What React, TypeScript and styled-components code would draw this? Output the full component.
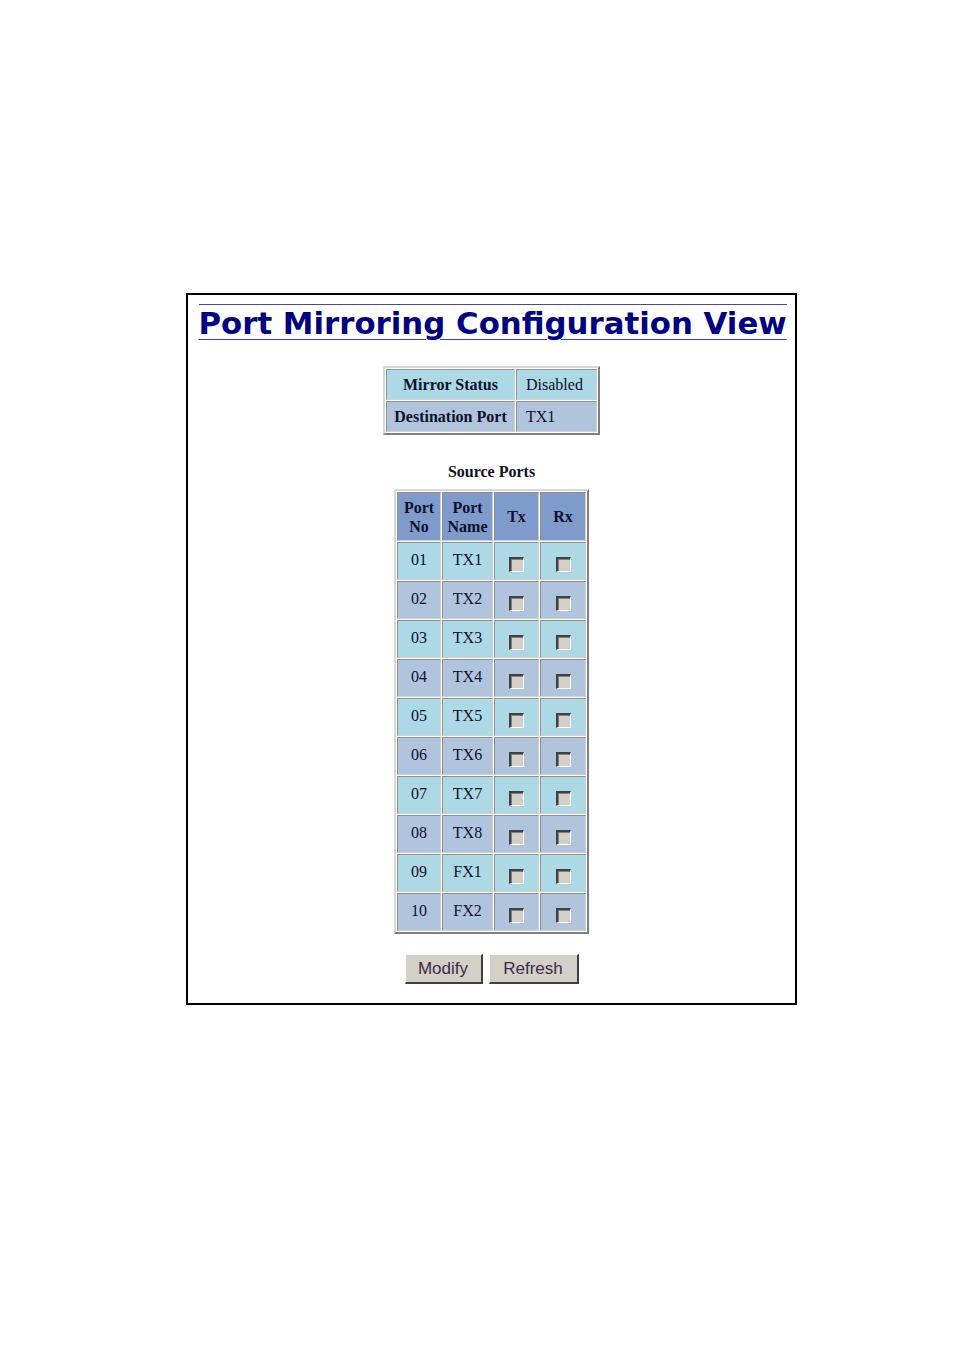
import styled, { createGlobalStyle } from 'styled-components';

const GlobalStyle = createGlobalStyle`
  html, body {
    margin: 0;
    padding: 0;
    background: #ffffff;
  }
`;

const Page = styled.div`
  padding: 293px 0 0 186px;
  height: 1351px;
  box-sizing: border-box;
`;

const Frame = styled.div`
  width: 611px;
  height: 712px;
  box-sizing: border-box;
  border: 2px solid #000;
  display: flex;
  flex-direction: column;
  align-items: center;
  padding-top: 9px;
`;

const Title = styled.h1`
  margin: 0 0 0 2px;
  width: 588px;
  border-top: 1px solid #4848a0;
  text-align: center;
  font-family: 'DejaVu Sans', Verdana, sans-serif;
  font-weight: bold;
  font-size: 30.8px;
  line-height: 36px;
  color: #000080;
  text-decoration: underline;
  text-decoration-color: #3c3ca8;
  text-decoration-thickness: 1px;
  text-underline-offset: 5px;
  white-space: nowrap;
`;

const Grid = styled.table<{ $top: number }>`
  margin-top: ${(p) => p.$top}px;
  border-collapse: separate;
  border-spacing: 1px;
  border: 2px solid;
  border-color: #d8d8d8 #808080 #808080 #d8d8d8;
  font-family: 'Liberation Serif', 'Times New Roman', serif;
  font-size: 16px;
  color: #10102a;
`;

const Cell = styled.td<{ $bg: string; $bold?: boolean; $w?: number; $h: number; $left?: boolean }>`
  background: ${(p) => p.$bg};
  font-weight: ${(p) => (p.$bold ? 'bold' : 'normal')};
  width: ${(p) => (p.$w ? `${p.$w}px` : 'auto')};
  height: ${(p) => p.$h}px;
  border: 1px solid;
  border-color: #909090 #d0d0d0 #d0d0d0 #909090;
  text-align: ${(p) => (p.$left ? 'left' : 'center')};
  padding: ${(p) => (p.$left ? '0 4px 0 9px' : '0 4px')};
  line-height: 19px;
  box-sizing: border-box;
  white-space: nowrap;
`;

const PortCell = styled(Cell)`
  padding-bottom: 4px;
`;

const Caption = styled.div`
  margin-top: 28px;
  font-family: 'Liberation Serif', 'Times New Roman', serif;
  font-weight: bold;
  font-size: 16px;
  color: #10102a;
`;

const Box = styled.span`
  display: inline-block;
  width: 15px;
  height: 15px;
  box-sizing: border-box;
  margin-top: 5px;
  background: #d4d0c8;
  border-style: solid;
  border-width: 2px 1px 1px 2px;
  border-color: #404040 #ffffff #ffffff #404040;
  box-shadow: inset 1px 1px 0 #808080;
  vertical-align: middle;
`;

const Actions = styled.div`
  margin-top: 20px;
  display: flex;
  gap: 6px;
`;

const Button = styled.button<{ $w: number }>`
  width: ${(p) => p.$w}px;
  height: 30px;
  background: #d4d0c8;
  border-style: solid;
  border-width: 1px 2px 2px 1px;
  border-color: #ffffff #404040 #404040 #ffffff;
  font-family: 'Liberation Sans', Arial, sans-serif;
  font-size: 17px;
  color: #3a2c48;
  padding: 0;
`;

const LIGHT = '#add8e6';
const STEEL = '#b0c4de';
const HEAD = '#7f9bcb';

const ports = ['TX1', 'TX2', 'TX3', 'TX4', 'TX5', 'TX6', 'TX7', 'TX8', 'FX1', 'FX2'];

export default function App() {
  return (
    <Page>
      <GlobalStyle />
      <Frame>
        <Title>Port Mirroring Configuration View</Title>
        <Grid $top={25}>
          <tbody>
            <tr>
              <Cell $bg={LIGHT} $bold $w={129} $h={31}>Mirror Status</Cell>
              <Cell $bg={LIGHT} $w={81} $h={31} $left>Disabled</Cell>
            </tr>
            <tr>
              <Cell $bg={STEEL} $bold $h={31}>Destination Port</Cell>
              <Cell $bg={STEEL} $h={31} $left>TX1</Cell>
            </tr>
          </tbody>
        </Grid>
        <Caption>Source Ports</Caption>
        <Grid $top={8}>
          <tbody>
            <tr>
              <Cell $bg={HEAD} $bold $w={44} $h={49}>Port<br />No</Cell>
              <Cell $bg={HEAD} $bold $w={51} $h={49}>Port<br />Name</Cell>
              <Cell $bg={HEAD} $bold $w={45} $h={49}>Tx</Cell>
              <Cell $bg={HEAD} $bold $w={46} $h={49}>Rx</Cell>
            </tr>
            {ports.map((name, i) => {
              const bg = i % 2 === 0 ? LIGHT : STEEL;
              return (
                <tr key={name}>
                  <PortCell $bg={bg} $h={38}>{String(i + 1).padStart(2, '0')}</PortCell>
                  <PortCell $bg={bg} $h={38}>{name}</PortCell>
                  <Cell $bg={bg} $h={38}><Box /></Cell>
                  <Cell $bg={bg} $h={38}><Box /></Cell>
                </tr>
              );
            })}
          </tbody>
        </Grid>
        <Actions>
          <Button $w={78}>Modify</Button>
          <Button $w={90}>Refresh</Button>
        </Actions>
      </Frame>
    </Page>
  );
}
